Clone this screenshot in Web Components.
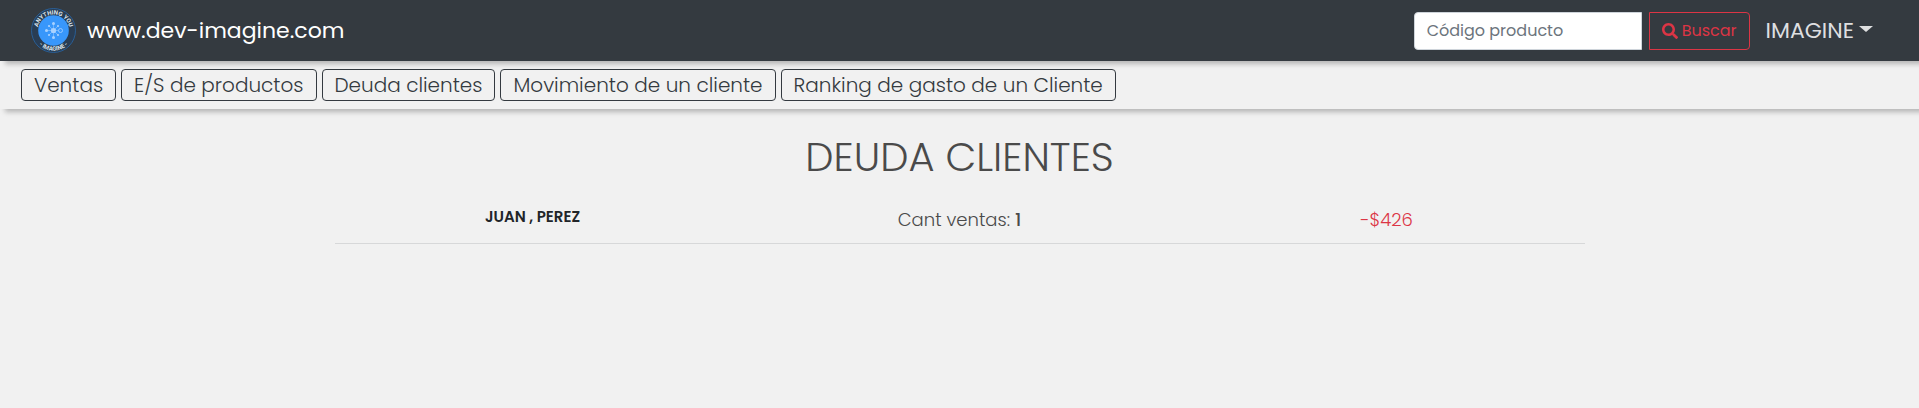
<!DOCTYPE html>
<html lang="es">
<head>
<meta charset="utf-8">
<meta name="viewport" content="width=device-width, initial-scale=1">
<title>Deuda clientes</title>
<style>
body { margin: 0; min-height: 100vh; background: #f1f1f1; color: #212529; font-family: Poppins, Inter, sans-serif; font-size: 16px; line-height: 24px; }
</style>
</head>
<body>
<app-navbar>
  <site-brand slot="brand"></site-brand>
  <product-search slot="actions"></product-search>
  <user-menu slot="actions">IMAGINE</user-menu>
</app-navbar>
<section-nav>
  <nav-button>Ventas</nav-button>
  <nav-button>E/S de productos</nav-button>
  <nav-button>Deuda clientes</nav-button>
  <nav-button>Movimiento de un cliente</nav-button>
  <nav-button>Ranking de gasto de un Cliente</nav-button>
</section-nav>
<debt-list>
  <span slot="title">DEUDA CLIENTES</span>
  <debt-row>
    <span slot="name">JUAN , PEREZ</span>
    <span slot="count">1</span>
    <span slot="amount">-$426</span>
  </debt-row>
</debt-list>
<script>
function define(name, html) {
  const template = document.createElement('template');
  template.innerHTML = html;
  customElements.define(name, class extends HTMLElement {
    constructor() {
      super();
      this.attachShadow({ mode: 'open' }).append(template.content.cloneNode(true));
    }
  });
}

define('app-navbar', `
<style>
:host { display: block; position: relative; z-index: 2; background: #343a40; box-shadow: 5px 3px 5px rgba(0,0,0,.25); }
header { display: flex; justify-content: space-between; align-items: center; height: 61px; padding: 0 46px 0 31px; box-sizing: border-box; }
div { display: flex; align-items: center; gap: 16px; }
</style>
<header><slot name="brand"></slot><div><slot name="actions"></slot></div></header>`);

define('site-brand', `
<style>
:host { display: block; }
a { display: flex; align-items: center; gap: 11px; color: #fff; font-size: 22px; line-height: 32px; text-decoration: none; }
svg { display: block; width: 45px; height: 45px; }
text { font-family: Roboto, sans-serif; font-weight: 700; font-size: 6px; fill: #dfe6ec; }
</style>
<a href="#">
<svg viewBox="0 0 45 45" aria-hidden="true">
  <defs><path id="top" d="M6.500 22.500a16 16 0 0 1 32 0"/><path id="bottom" d="M2.300 22.500a20.200 20.200 0 0 0 40.400 0"/></defs>
  <circle cx="22.500" cy="22.500" r="22" fill="#293d54" stroke="#2867a8" stroke-width=".8"/>
  <circle cx="22.500" cy="22.500" r="15.300" fill="#3897fb"/>
  <g stroke="#a9d2ff" stroke-width=".5" fill="none"><path d="M15.500 22.500h12M22.500 15.500v14M18 18l9 9M27 18l-9 9"/><circle cx="29.500" cy="22.500" r="2" stroke-width=".8"/></g>
  <g fill="#a9d2ff"><circle cx="22.500" cy="22.500" r="2.600"/><circle cx="15.500" cy="22.500" r="1.500"/><circle cx="22.500" cy="15.500" r="1.500"/><circle cx="22.500" cy="29.500" r="1.500"/><circle cx="18" cy="18" r="1.100"/><circle cx="27" cy="18" r="1.100"/><circle cx="18" cy="27" r="1.100"/><circle cx="27" cy="27" r="1.100"/></g>
  <text text-anchor="middle"><textPath href="#top" startOffset="50%">ANYTHING YOU</textPath></text>
  <text text-anchor="middle"><textPath href="#bottom" startOffset="50%">- IMAGINE -</textPath></text>
</svg>
<span>www.dev-imagine.com</span></a>`);

define('product-search', `
<style>
:host { display: block; }
form { display: flex; gap: 7px; margin: 0; }
input, button { box-sizing: border-box; height: 38px; font: inherit; line-height: 24px; padding: 0 12px; }
input { width: 228px; border: 1px solid #ced4da; border-radius: 4px 0 0 4px; background: #fff; color: #495057; }
input::placeholder { color: #6c757d; opacity: 1; }
button { display: flex; align-items: center; gap: 4px; border: 1px solid #dc3545; border-radius: 0 4px 4px 0; background: none; color: #dc3545; }
svg { width: 16px; height: 16px; fill: currentColor; }
</style>
<form onsubmit="return false"><input type="text" placeholder="Código producto" aria-label="Código producto"><button type="submit"><svg viewBox="0 0 512 512" aria-hidden="true"><path d="M505 442.700L405.300 343c-4.500-4.500-10.600-7-17-7H372c27.600-35.300 44-79.700 44-128C416 93.100 322.900 0 208 0S0 93.100 0 208s93.100 208 208 208c48.300 0 92.700-16.400 128-44v16.300c0 6.400 2.500 12.500 7 17l99.700 99.700c9.400 9.400 24.600 9.400 33.900 0l28.300-28.300c9.400-9.400 9.400-24.600.1-34zM208 336c-70.700 0-128-57.200-128-128 0-70.700 57.200-128 128-128 70.700 0 128 57.200 128 128 0 70.700-57.200 128-128 128z"/></svg><span>Buscar</span></button></form>`);

define('user-menu', `
<style>
:host { display: block; }
button { display: flex; align-items: center; gap: 5px; padding: 0; border: 0; background: none; color: #dedfe0; font: inherit; font-size: 22px; line-height: 32px; }
i { border: 6px solid transparent; border-width: 6px 7px 0; border-top-color: currentColor; margin-bottom: 4px; }
</style>
<button type="button" aria-haspopup="menu"><slot></slot><i></i></button>`);

define('section-nav', `
<style>
:host { display: block; box-shadow: 5px 3px 5px rgba(0,0,0,.25); }
nav { display: flex; flex-wrap: wrap; gap: 5px; padding: 8px 21px; }
</style>
<nav><slot></slot></nav>`);

define('nav-button', `
<style>
:host { display: block; }
button { display: block; box-sizing: border-box; height: 32px; padding: 0 12px; border: 1px solid #343a40; border-radius: 4px; background: none; color: #343a40; font: inherit; font-size: 20px; font-weight: 300; line-height: 30px; }
</style>
<button type="button"><slot></slot></button>`);

define('debt-list', `
<style>
:host { display: block; }
main { max-width: 1250px; margin: 0 auto; padding: 24px 0; }
h1 { margin: 0; color: #4a4a4a; font-size: 40px; font-weight: 300; line-height: 48px; text-align: center; }
</style>
<main><h1><slot name="title"></slot></h1><slot></slot></main>`);

define('debt-row', `
<style>
:host { display: block; border-bottom: 1px solid #d7d8d9; }
div { display: grid; grid-template-columns: repeat(3, 1fr); column-gap: 31px; padding: 24px 0 8px; text-align: center; font-size: 18px; font-weight: 300; line-height: 30px; }
.name { color: #212529; font-size: 15px; font-weight: 600; line-height: 24px; }
.count { color: #4a4a4a; }
.count b { font-weight: 500; }
.amount { color: #dc3545; }
</style>
<div><span class="name"><slot name="name"></slot></span><span class="count">Cant ventas: <b><slot name="count"></slot></b></span><span class="amount"><slot name="amount"></slot></span></div>`);
</script>
</body>
</html>
